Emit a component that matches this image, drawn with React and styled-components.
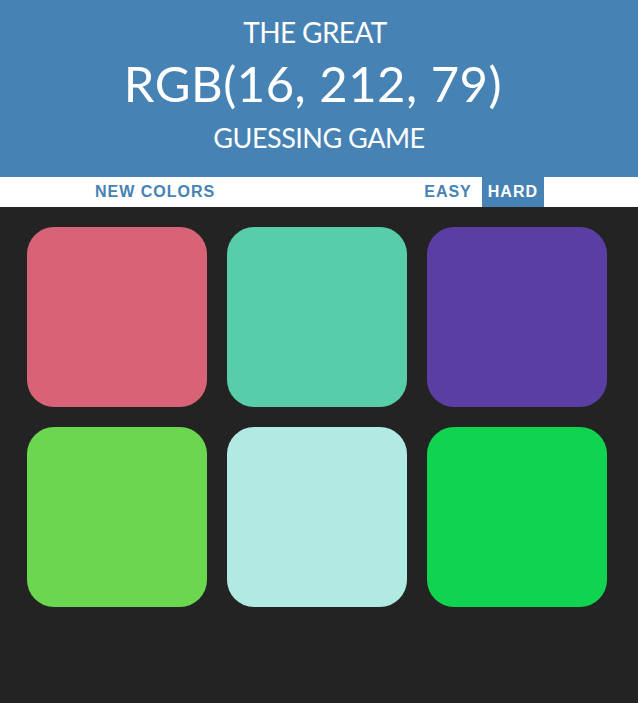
import React from "react";
import styled, { createGlobalStyle } from "styled-components";

const Global = createGlobalStyle`
  html, body { margin: 0; padding: 0; background: #232323; }
  body { font-family: "Liberation Sans", Arial, sans-serif; }
`;

const Header = styled.header`
  background: #4682b4;
  color: #ffffff;
  font-family: Lato, "Open Sans", sans-serif;
  font-weight: 400;
  text-transform: uppercase;
  text-align: center;
  padding: 11px 0 15px;
  display: flex;
  flex-direction: column;
  align-items: center;
`;

const Line = styled.div`
  font-size: ${(p) => p.$size}px;
  line-height: ${(p) => p.$lh}px;
  letter-spacing: ${(p) => p.$ls}px;
  margin-left: ${(p) => p.$shift || 0}px;
  white-space: nowrap;
`;

const Stripe = styled.nav`
  background: #ffffff;
  height: 30px;
  display: flex;
  align-items: stretch;
  padding-left: 89px;
`;

const Button = styled.button`
  border: none;
  outline: none;
  margin: 0;
  padding: 0 6px;
  height: 100%;
  background: ${(p) => (p.$selected ? "#4682b4" : "#ffffff")};
  color: ${(p) => (p.$selected ? "#ffffff" : "#4682b4")};
  font-family: "Liberation Sans", Arial, sans-serif;
  font-weight: 700;
  font-size: 16px;
  letter-spacing: 1px;
  text-transform: uppercase;
  cursor: pointer;
`;

const Message = styled.span`
  width: 197px;
`;

const Modes = styled.div`
  display: flex;
  gap: 4px;
`;

const Board = styled.main`
  display: grid;
  grid-template-columns: repeat(3, 180px);
  grid-auto-rows: 180px;
  gap: 20px;
  padding: 20px 0 0 27px;
`;

const Square = styled.div`
  border-radius: 27px;
  background: ${(p) => p.$color};
`;

const colors = [
  "rgb(217, 99, 118)",
  "rgb(87, 205, 170)",
  "rgb(90, 62, 163)",
  "rgb(107, 214, 80)",
  "rgb(176, 234, 227)",
  "rgb(16, 212, 79)",
];

export default function App() {
  return (
    <>
      <Global />
      <Header>
        <Line $size={28} $lh={42} $ls={-0.6} $shift={-8}>The Great</Line>
        <Line $size={49} $lh={60} $ls={0.5} $shift={-12}>RGB(16, 212, 79)</Line>
        <Line $size={27} $lh={49} $ls={-0.5}>Guessing Game</Line>
      </Header>
      <Stripe>
        <Button>New Colors</Button>
        <Message />
        <Modes>
          <Button>Easy</Button>
          <Button $selected>Hard</Button>
        </Modes>
      </Stripe>
      <Board>
        {colors.map((c, i) => (
          <Square key={i} $color={c} />
        ))}
      </Board>
    </>
  );
}
